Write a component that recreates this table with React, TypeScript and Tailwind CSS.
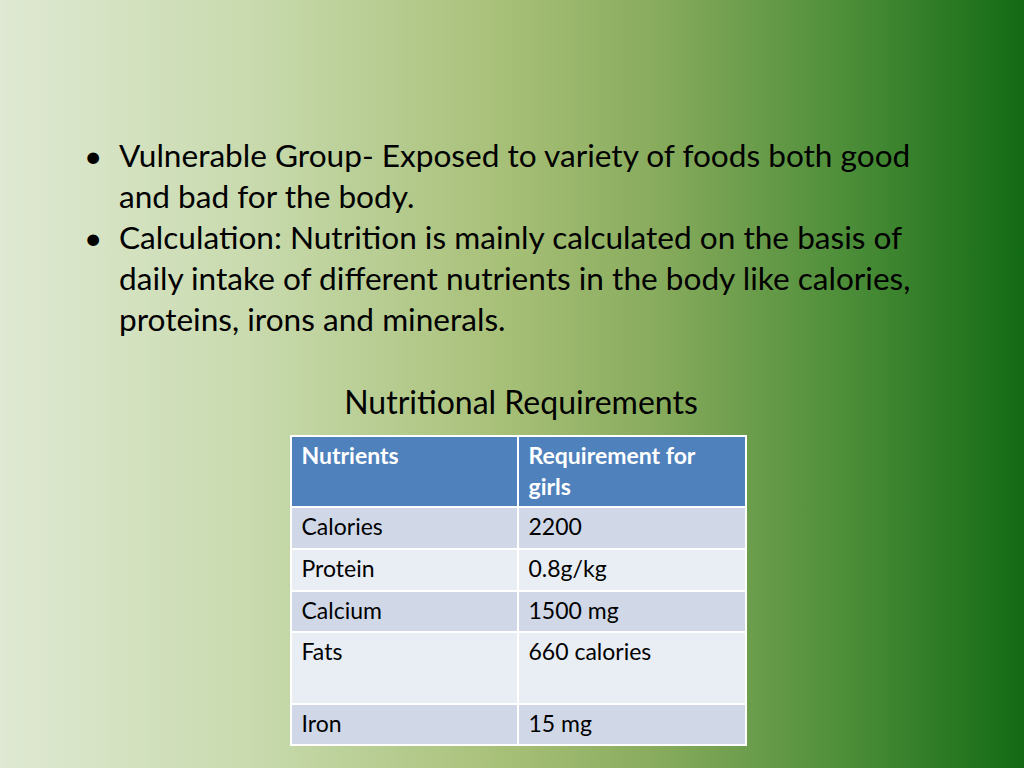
const rows = [
  { name: 'Calories', value: '2200', h: 'h-[42px]' },
  { name: 'Protein', value: '0.8g/kg', h: 'h-[42px]' },
  { name: 'Calcium', value: '1500 mg', h: 'h-[41px]' },
  { name: 'Fats', value: '660 calories', h: 'h-[72px]' },
  { name: 'Iron', value: '15 mg', h: 'h-[41px]' },
];

export default function App() {
  return (
    <div
      className="w-[1024px] h-[768px] overflow-hidden bg-[linear-gradient(to_right,#dfe9d3_0%,#c8daad_25%,#a6bf76_50%,#86aa5c_65%,#4f8f3a_82%,#136a14_100%)] text-black"
      style={{ fontFamily: 'Lato, "Open Sans", sans-serif' }}
    >
      {/* bullets */}
      <ul className="pt-[135px] pl-[84px] text-[31.6px] leading-[41px] whitespace-nowrap">
        <li className="flex">
          <span className="w-[35px] shrink-0">•</span>
          <span>
            Vulnerable Group- Exposed to variety of foods both good
            <br />
            and bad for the body.
          </span>
        </li>
        <li className="flex">
          <span className="w-[35px] shrink-0">•</span>
          <span>
            Calculation: Nutrition is mainly calculated on the basis of
            <br />
            daily intake of different nutrients in the body like calories,
            <br />
            proteins, irons and minerals.
          </span>
        </li>
      </ul>

      <h2 className="mt-[41px] text-center text-[32px] leading-[41px] pl-[18px]">Nutritional Requirements</h2>

      {/* table */}
      <div className="mt-[13px] flex justify-center pl-[12px]">
        <table className="w-[457px] border-collapse border-2 border-white/80 text-[23px] leading-[31px]">
          <thead>
            <tr className="bg-[#4f81bd] text-white h-[71px]">
              <th className="w-[227px] border-2 border-white text-left align-top px-[10px] pt-[3px] font-bold">Nutrients</th>
              <th className="border-2 border-white text-left align-top px-[10px] pt-[3px] font-bold">
                Requirement for
                <br />
                girls
              </th>
            </tr>
          </thead>
          <tbody>
            {rows.map((r, i) => (
              <tr key={r.name} className={(i % 2 === 0 ? 'bg-[#d0d8e8] ' : 'bg-[#e9edf4] ') + r.h}>
                <td className="border-2 border-white align-top px-[10px] pt-[3px]">{r.name}</td>
                <td className="border-2 border-white align-top px-[10px] pt-[3px]">{r.value}</td>
              </tr>
            ))}
          </tbody>
        </table>
      </div>
    </div>
  );
}
